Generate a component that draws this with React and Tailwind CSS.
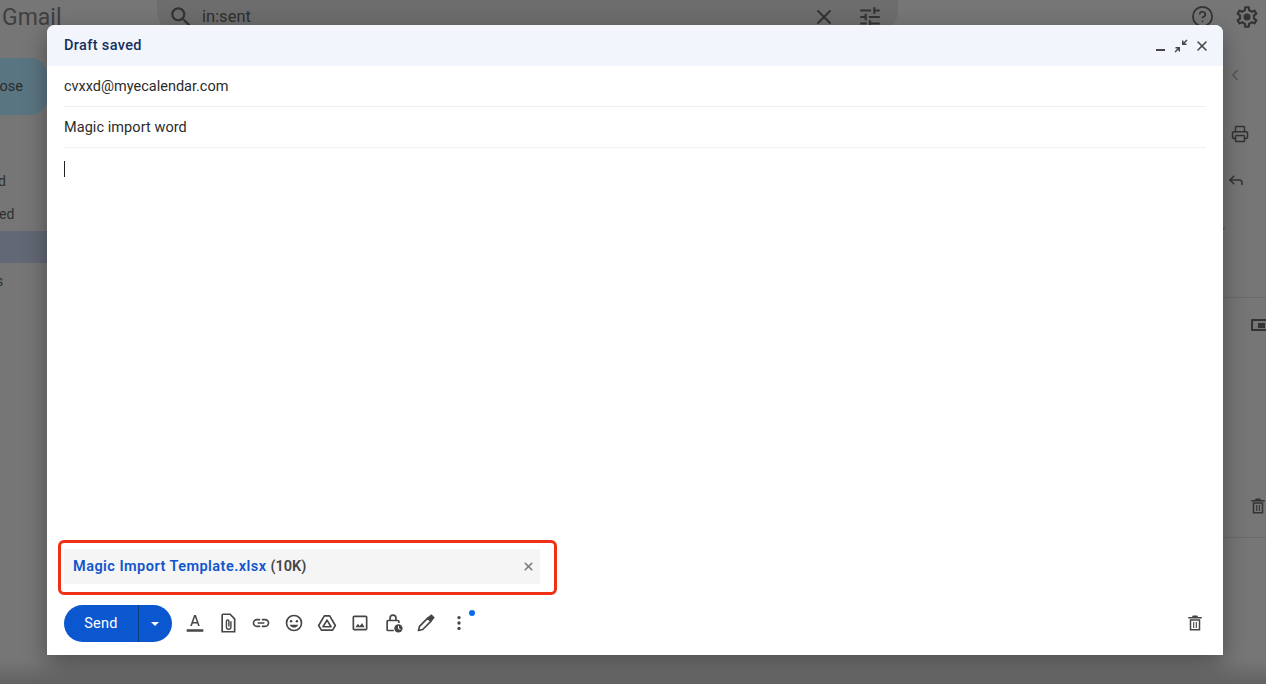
import { X, HelpCircle, ChevronLeft, Printer, Reply, ChevronDown } from "lucide-react";

const font = { fontFamily: "Roboto, 'Liberation Sans', sans-serif" };

const ToolIcon = ({ children }) => (
  <button className="w-[33px] h-[33px] flex items-center justify-center text-[#444746]">
    <svg width="20" height="20" viewBox="0 0 24 24" fill="currentColor">
      {children}
    </svg>
  </button>
);

const TrashIcon = ({ size, color }) => (
  <svg width={size} height={size} viewBox="0 0 24 24" fill={color}>
    <path d="M9 2h6l1 2h5v2H3V4h5l1-2zM5 7h14v15H5V7zm2 2v11h10V9H7zm2.500 1.500h1.500v8H9.500v-8zm3.500 0h1.500v8H13v-8z" />
  </svg>
);

const Toolbar = () => (
  <div className="flex items-center ml-[6px] mt-[-2px]">
    <ToolIcon>
      <path d="M2 19.500h20v3H2z" />
      <path d="M10.900 2.500h2.200l4.600 13h-2l-1-3H9.300l-1 3h-2l4.600-13zm-1 8.300h4.200L12 4.900l-2.100 5.900z" />
    </ToolIcon>
    <ToolIcon>
      <path d="M6 1.500h8.500L20 7v15.500H5V2.500a1 1 0 0 1 1-1z" fill="none" stroke="currentColor" strokeWidth="2" />
      <path
        d="M15.500 10v6.700a2.700 2.700 0 0 1-5.400 0V9.800a1.500 1.500 0 0 1 3 0v6.400"
        fill="none"
        stroke="currentColor"
        strokeWidth="1.700"
      />
    </ToolIcon>
    <ToolIcon>
      <path d="M3.900 12c0-1.710 1.390-3.100 3.100-3.100h4V7H7c-2.760 0-5 2.240-5 5s2.240 5 5 5h4v-1.900H7c-1.710 0-3.100-1.390-3.100-3.100zM8 13h8v-2H8v2zm9-6h-4v1.900h4c1.710 0 3.100 1.390 3.100 3.100s-1.390 3.100-3.100 3.100h-4V17h4c2.760 0 5-2.240 5-5s-2.240-5-5-5z" />
    </ToolIcon>
    <ToolIcon>
      <path d="M12 2a10 10 0 1 0 0 20 10 10 0 0 0 0-20zm0 18a8 8 0 1 1 0-16 8 8 0 0 1 0 16z" />
      <circle cx="8.500" cy="9.800" r="1.500" />
      <circle cx="15.500" cy="9.800" r="1.500" />
      <path d="M12 17.500c2.300 0 4.300-1.400 5.100-3.500H6.900c.8 2.100 2.800 3.500 5.100 3.500z" />
    </ToolIcon>
    <ToolIcon>
      <path
        d="M8.800 3.500h6.400L22 15l-3.300 5.500H5.300L2 15z"
        fill="none"
        stroke="currentColor"
        strokeWidth="2"
        strokeLinejoin="round"
      />
      <path d="M12 8.500 7.200 16.500h9.600z" fill="none" stroke="currentColor" strokeWidth="2" strokeLinejoin="round" />
    </ToolIcon>
    <ToolIcon>
      <path d="M19 3H5a2 2 0 0 0-2 2v14a2 2 0 0 0 2 2h14a2 2 0 0 0 2-2V5a2 2 0 0 0-2-2zm0 16H5V5h14v14z" />
      <path d="M6.500 17l3-4 2 2.500 1.500-1.500 1.500-2 3 5h-11z" />
    </ToolIcon>
    <ToolIcon>
      <path d="M12 1.500a4.500 4.500 0 0 0-4.500 4.500v2H6a2 2 0 0 0-2 2v10a2 2 0 0 0 2 2h7v-2H6V10h12v2h2v-2a2 2 0 0 0-2-2h-1.500V6A4.500 4.500 0 0 0 12 1.500zm0 2A2.500 2.500 0 0 1 14.500 6v2h-5V6A2.500 2.500 0 0 1 12 3.500z" />
      <circle cx="18.500" cy="18.500" r="5" />
      <path d="M18 15.500h1.200v2.800l2 1.200-.6 1-2.600-1.500z" fill="#fff" />
    </ToolIcon>
    <ToolIcon>
      <path
        d="M3 21l1.200-5L14 6.200l3.800 3.800L8 19.800 3 21z"
        fill="none"
        stroke="currentColor"
        strokeWidth="2"
        strokeLinejoin="round"
      />
      <path d="M13.500 5.500 18.500 1.500 22.500 5.500 18.500 10.500z" />
    </ToolIcon>
    <div className="relative">
      <ToolIcon>
        <circle cx="12" cy="5.500" r="2" />
        <circle cx="12" cy="12" r="2" />
        <circle cx="12" cy="18.500" r="2" />
      </ToolIcon>
      <span className="absolute top-[4px] right-[0px] w-[6px] h-[6px] rounded-full bg-[#0b6cf0]" />
    </div>
  </div>
);

const Compose = () => (
  <div className="absolute left-[47px] top-[25px] w-[1176px] h-[630px] bg-white rounded-t-lg flex flex-col shadow-[0_8px_24px_rgba(0,0,0,0.35)]">
    <div className="h-[41px] shrink-0 rounded-t-lg bg-[#f2f6fc] flex items-center justify-between pl-[17px] pr-[13px]">
      <span className="text-[14.5px] font-medium tracking-[0.36px] text-[#14305f]">Draft saved</span>
      <div className="flex items-center gap-[6px] text-[#444746]">
        <span className="w-[9px] h-[2px] bg-[#444746] mt-[9px] mr-[3px]" />
        <svg width="14" height="14" viewBox="0 0 14 14" fill="currentColor">
          <path d="M12.500 0.500 13.500 1.500 10.500 4.500 12.500 4.500 12.500 6 8 6 8 1.500 9.500 1.500 9.500 3.500z" />
          <path d="M1.500 13.500 0.500 12.500 3.500 9.500 1.500 9.500 1.500 8 6 8 6 12.500 4.500 12.500 4.500 10.500z" />
        </svg>
        <X size={16} strokeWidth={2.4} />
      </div>
    </div>
    <div className="mx-[17px] h-[41px] shrink-0 flex items-center pt-[2px] border-b border-[#f0f0f0] text-[14.5px] text-[#2b2b2b]">
      cvxxd@myecalendar.com
    </div>
    <div className="mx-[17px] h-[41px] shrink-0 flex items-center pt-[2px] border-b border-[#f0f0f0] text-[14.5px] tracking-[0.06px] text-[#2b2b2b]">
      Magic import word
    </div>
    <div className="flex-1 px-[17px] pt-[13px]">
      <div className="w-px h-[16px] bg-[#222]" />
    </div>
    <div className="ml-[11px] w-[499px] h-[55px] border-[3px] border-[#f03015] rounded-[6px] pl-[3px] pt-[6px]">
      <div className="w-[476px] h-[35px] bg-[#f5f5f5] flex items-center justify-between pl-[9px] pr-[5px] text-[14.5px] font-semibold">
        <span>
          <span className="text-[#1155cc] tracking-[0.46px]">Magic Import Template.xlsx</span>
          <span className="text-[#444] ml-1">(10K)</span>
        </span>
        <X size={13} strokeWidth={3} className="text-[#7a7a7a]" />
      </div>
    </div>
    <div className="h-[60px] shrink-0 flex items-center pl-[17px] pr-[19px] justify-between pb-[3px]">
      <div className="flex items-center">
        <div className="flex w-[108px] h-[37px] rounded-full bg-[#0b57d0] text-white items-center">
          <span className="w-[75px] text-center text-[14.5px] tracking-[0.3px] border-r border-[#0a3a80] leading-[37px]">Send</span>
          <span className="flex-1 flex justify-center pr-[2px]">
            <span className="w-0 h-0 border-l-[4.500px] border-r-[4.500px] border-t-[4.500px] border-l-transparent border-r-transparent border-t-white" />
          </span>
        </div>
        <Toolbar />
      </div>
      <div className="mt-[-2px]">
        <TrashIcon size={18} color="#444746" />
      </div>
    </div>
  </div>
);

// dimmed gmail page behind the compose window
const Background = () => (
  <div className="h-[684px] flex flex-col bg-[#767676] text-[#2f2f2f]">
    <div className="h-[51px] shrink-0 flex">
      <div className="w-[157px] pl-[2px] pt-[3px] text-[23px] leading-[30px] text-[#3f3f3f]">Gmail</div>
      <div className="w-[741px] h-[34px] rounded-b-[24px] bg-[#6d6d6d] flex items-center pl-[11px] pr-[15px]">
        <svg width="26" height="26" viewBox="0 0 24 24" fill="#333">
          <path d="M15.500 14h-.79l-.28-.27A6.471 6.471 0 0 0 16 9.500 6.500 6.500 0 1 0 9.500 16c1.610 0 3.090-.59 4.230-1.570l.27.28v.79l5 4.990L20.490 19l-4.990-5zm-6 0C7.010 14 5 11.990 5 9.500S7.010 5 9.500 5 14 7.010 14 9.500 11.990 14 9.500 14z" />
        </svg>
        <span className="ml-[8px] text-[16.500px]">in:sent</span>
        <X size={24} strokeWidth={2} className="ml-auto mr-[21px] text-[#333]" />
        <svg width="26" height="26" viewBox="0 0 24 24" fill="#333">
          <path d="M3 17v2h6v-2H3zM3 5v2h10V5H3zm10 16v-2h8v-2h-8v-2h-2v6h2zM7 9v2H3v2h4v2h2V9H7zm14 4v-2H11v2h10zm-6-4h2V7h4V5h-4V3h-2v6z" />
        </svg>
      </div>
      <div className="flex-1 flex justify-end items-start pt-[4px] pr-[6px] gap-[20px] text-[#333]">
        <HelpCircle size={23} strokeWidth={1.8} className="mt-[1px]" />
        <svg width="26" height="26" viewBox="0 0 24 24" fill="#333">
          <path d="M19.430 12.980c.04-.32.07-.64.07-.98 0-.34-.03-.66-.07-.98l2.110-1.650c.19-.15.24-.42.12-.64l-2-3.460c-.12-.22-.39-.3-.61-.22l-2.490 1c-.52-.4-1.080-.73-1.690-.98l-.38-2.650C14.460 2.180 14.250 2 14 2h-4c-.25 0-.46.18-.49.42l-.38 2.650c-.61.25-1.170.59-1.690.98l-2.490-1c-.23-.09-.49 0-.61.22l-2 3.460c-.13.22-.07.49.12.64l2.110 1.650c-.04.32-.07.65-.07.98 0 .33.03.66.07.98l-2.110 1.650c-.19.15-.24.42-.12.64l2 3.460c.12.22.39.3.61.22l2.490-1c.52.4 1.080.73 1.690.98l.38 2.650c.03.24.24.42.49.42h4c.25 0 .46-.18.49-.42l.38-2.650c.61-.25 1.170-.59 1.690-.98l2.490 1c.23.09.49 0 .61-.22l2-3.460c.12-.22.07-.49-.12-.64l-2.110-1.650zM17.450 11.270c.04.31.05.52.05.73 0 .21-.02.43-.05.73l-.14 1.130.89.7 1.080.84-.7 1.210-1.270-.51-1.040-.42-.9.68c-.43.32-.84.56-1.250.73l-1.060.43-.16 1.130-.2 1.350h-1.400l-.19-1.350-.16-1.130-1.060-.43c-.43-.18-.83-.41-1.230-.71l-.91-.7-1.060.43-1.270.51-.7-1.210 1.080-.84.89-.7-.14-1.130c-.03-.31-.05-.54-.05-.74s.02-.43.05-.73l.14-1.130-.89-.7-1.080-.84.7-1.210 1.270.51 1.040.42.9-.68c.43-.32.84-.56 1.250-.73l1.060-.43.16-1.130.2-1.350h1.390l.19 1.350.16 1.130 1.060.43c.43.18.83.41 1.230.71l.91.7 1.060-.43 1.270-.51.7 1.210-1.070.85-.89.7.14 1.130z" />
          <circle cx="12" cy="12" r="3.300" />
        </svg>
      </div>
    </div>
    <div className="flex-1 flex">
      <div className="w-[47px] shrink-0 flex flex-col">
        <div className="mt-[7px] h-[57px] rounded-r-[16px] bg-[#5a7582] flex items-center justify-end text-[14.500px] pr-[24px] text-[#2a2a2a] w-[47px] overflow-hidden">
          ose
        </div>
        <div className="mt-[57px] h-[18px] text-[14px] leading-[18px]">
          <span className="ml-[-2px]">d</span>
        </div>
        <div className="mt-[15px] h-[18px] text-[14px] leading-[18px]">
          <span className="ml-[-1px]">ed</span>
        </div>
        <div className="mt-[8px] h-[32px] bg-[#626875]" />
        <div className="mt-[9px] text-[14px] leading-[18px] overflow-hidden">
          <span className="ml-[-4px]">s</span>
        </div>
      </div>
      <div className="flex-1" />
      <div className="w-[43px] shrink-0 flex flex-col text-[#333]">
        <ChevronLeft size={18} strokeWidth={1.8} className="mt-[15px] ml-[3px] text-[#555]" />
        <Printer size={18} strokeWidth={2} className="mt-[41px] ml-[8px]" />
        <Reply size={18} strokeWidth={2} className="mt-[28px] ml-[4px]" />
        <ChevronDown size={10} strokeWidth={2} className="mt-[35px] ml-[-6px]" />
        <div className="mt-[63px] border-t border-[#6b6b6b] h-[240px]">
          <div className="w-[17px] h-[12px] border-2 border-[#333] ml-[28px] mt-[21px] rounded-[1px] flex justify-end items-end pr-[1px] pb-[1px]">
            <span className="w-[7px] h-[5px] bg-[#333]" />
          </div>
          <div className="ml-[26px] mt-[166px]">
            <TrashIcon size={18} color="#333" />
          </div>
        </div>
        <div className="border-t border-[#6b6b6b]" />
      </div>
    </div>
    <div className="h-[24px] shrink-0 bg-gradient-to-b from-[#767676] to-[#626262]" />
  </div>
);

export default function App() {
  return (
    <div className="relative w-[1266px] h-[684px] overflow-hidden" style={font}>
      <Background />
      <Compose />
    </div>
  );
}
